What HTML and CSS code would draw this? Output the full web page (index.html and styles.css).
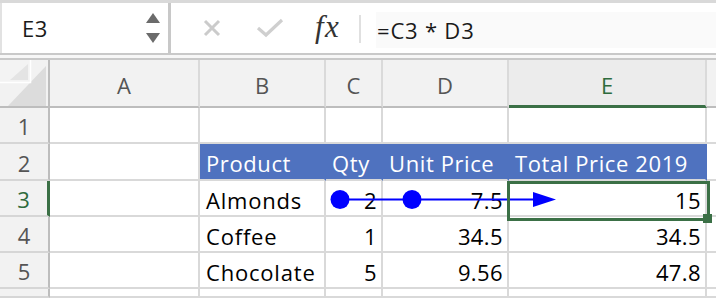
FILE: index.html
```html
<!DOCTYPE html>
<html lang="en">
<head>
    <meta charset="UTF-8">
    <title>Trace Precedents</title>
    <link rel="stylesheet" href="styles.css">
</head>
<body>
    <div class="toolbar">
        <div class="namebox">
            <span class="name">E3</span>
            <div class="spinner">
                <svg width="14" height="32" viewBox="0 0 14 32">
                    <polygon points="7,0 14,10 0,10" fill="#6b6b6b"/>
                    <polygon points="0,20 14,20 7,30" fill="#6b6b6b"/>
                </svg>
            </div>
        </div>
        <div class="actions">
            <svg class="icon-x" width="18" height="18" viewBox="0 0 18 18">
                <path d="M2 2 L16 16 M16 2 L2 16" stroke="#cbcbcb" stroke-width="3" fill="none"/>
            </svg>
            <svg class="icon-ok" width="28" height="20" viewBox="0 0 28 20">
                <path d="M2 10 L10 17 L26 2" stroke="#cfcfcf" stroke-width="3.2" fill="none"/>
            </svg>
            <span class="fx">fx</span>
        </div>
        <div class="formula">=C3 * D3</div>
    </div>
    <div class="gap"></div>

    <div class="sheet">
        <div class="hd corner">
            <svg width="48" height="48" viewBox="0 0 48 48">
                <rect x="0" y="0" width="30" height="22" fill="#f3f3f3"/>
                <polygon points="46,6 46,46 8,46" fill="#dcdcdc"/>
                <polygon points="28,4 28,20 10,20" fill="#e4e4e4"/>
                <path d="M0 22.5 H30.5 V0" stroke="#fff" stroke-width="1.5" fill="none"/>
            </svg>
        </div>
        <div class="hd">A</div>
        <div class="hd">B</div>
        <div class="hd">C</div>
        <div class="hd">D</div>
        <div class="hd active">E</div>
        <div class="hd last"></div>

        <div class="rh">1</div>
        <div class="c"></div><div class="c"></div><div class="c"></div><div class="c"></div><div class="c"></div><div class="c last"></div>

        <div class="rh">2</div>
        <div class="c"></div>
        <div class="c th">Product</div>
        <div class="c th">Qty</div>
        <div class="c th">Unit Price</div>
        <div class="c th">Total Price 2019</div>
        <div class="c last"></div>

        <div class="rh active">3</div>
        <div class="c"></div>
        <div class="c">Almonds</div>
        <div class="c num">2</div>
        <div class="c num">7.5</div>
        <div class="c num">15</div>
        <div class="c last"></div>

        <div class="rh">4</div>
        <div class="c"></div>
        <div class="c">Coffee</div>
        <div class="c num">1</div>
        <div class="c num">34.5</div>
        <div class="c num">34.5</div>
        <div class="c last"></div>

        <div class="rh">5</div>
        <div class="c"></div>
        <div class="c">Chocolate</div>
        <div class="c num">5</div>
        <div class="c num">9.56</div>
        <div class="c num">47.8</div>
        <div class="c last"></div>

        <div class="rh"></div>
        <div class="c"></div><div class="c"></div><div class="c"></div><div class="c"></div><div class="c"></div><div class="c last"></div>

        <!-- precedent tracer, drawn over the cells -->
        <svg class="tracer" width="716" height="238" viewBox="0 0 716 238">
            <line x1="340" y1="139.5" x2="540" y2="139.5" stroke="#0000ff" stroke-width="2"/>
            <circle cx="340" cy="139.5" r="9.5" fill="#0000ff"/>
            <circle cx="412" cy="139.5" r="9.5" fill="#0000ff"/>
            <polygon points="533,132 556,139.5 533,147" fill="#0000ff"/>
        </svg>
        <div class="selection"></div>
        <div class="handle"></div>
    </div>
</body>
</html>
```

FILE: styles.css
```css
body {
    margin: 0;
    font-family: "Open Sans", "Noto Sans", sans-serif;
    background: #fff;
    width: 716px;
    height: 298px;
    overflow: hidden;
}
.toolbar {
    display: flex;
    height: 55px;
    box-sizing: border-box;
    border-top: 3px solid #d9d9d9;
    border-bottom: 2px solid #c9c9c9;
    background: #fff;
}
.namebox {
    width: 171px;
    box-sizing: border-box;
    display: flex;
    align-items: center;
    border-left: 2px solid #e2e2e2;
    border-right: 3px solid #c8c8c8;
    padding-left: 20px;
}
.name {
    font-size: 22px;
    color: #1a1a1a;
    flex: 1;
    letter-spacing: 0.6px;
}
.spinner {
    display: flex;
    margin-right: 8px;
    margin-top: 2px;
}
.actions {
    display: flex;
    align-items: center;
    width: 190px;
    box-sizing: border-box;
    padding-left: 32px;
    position: relative;
}
.actions::after {
    content: "";
    position: absolute;
    right: 0;
    top: 12px;
    bottom: 10px;
    width: 2px;
    background: #e0e0e0;
}
.icon-x {
    margin-right: 35px;
}
.icon-ok {
    margin-right: 31px;
}
.fx {
    font-family: "Liberation Serif", "DejaVu Serif", serif;
    font-style: italic;
    font-size: 31px;
    color: #333;
    letter-spacing: 1.5px;
    margin-top: -3px;
}
.formula {
    flex: 1;
    margin: 9px 0 5px 15px;
    padding-left: 1px;
    background: #fafafa;
    font-size: 22px;
    color: #1a1a1a;
    display: flex;
    align-items: center;
    letter-spacing: 0.8px;
}
.gap {
    height: 3px;
    border-bottom: 2px solid #c9c9c9;
    background: #f7f7f7;
}
.sheet {
    position: relative;
    display: grid;
    grid-template-columns: 50px 150px 126px 57px 126px 198px 1fr;
    grid-template-rows: 48px 36px 37px 36px 36px 36px 1fr;
    height: 238px;
    font-size: 22px;
    color: #000;
}
.hd {
    background: #f2f2f2;
    color: #555;
    border-right: 2px solid #dadada;
    border-bottom: 2px solid #bdbdbd;
    display: flex;
    align-items: center;
    justify-content: center;
    padding-top: 4px;
    box-sizing: border-box;
}
.hd.corner {
    padding: 0;
    align-items: flex-start;
    justify-content: flex-start;
    border-right: 2px solid #bdbdbd;
}
.hd.active {
    color: #2e6b3d;
    background: #ececec;
    border-bottom: 3px solid #3b7046;
}
.hd.last {
    border-right: none;
}
.rh {
    background: #f2f2f2;
    color: #555;
    border-right: 2px solid #bdbdbd;
    border-bottom: 2px solid #d6d6d6;
    display: flex;
    align-items: center;
    justify-content: center;
    box-sizing: border-box;
    padding-top: 2px;
}
.rh.active {
    color: #2e6b3d;
    border-right: 3px solid #3b7046;
}
.c {
    border-right: 2px solid #d9d9d9;
    border-bottom: 2px solid #d9d9d9;
    box-sizing: border-box;
    display: flex;
    align-items: center;
    padding: 3px 4px 0 6px;
    letter-spacing: 0.8px;
    white-space: nowrap;
    overflow: hidden;
}
.c.num {
    justify-content: flex-end;
    letter-spacing: 0.4px;
}
.c.last {
    border-right: none;
}
.c.th {
    background: #4f72bf;
    color: #fff;
    border-right-color: #4f72bf;
    border-bottom-color: #d9d9d9;
    letter-spacing: 0.6px;
}
.tracer {
    position: absolute;
    left: 0;
    top: 0;
    pointer-events: none;
}
.selection {
    position: absolute;
    left: 507px;
    top: 121px;
    width: 203px;
    height: 40px;
    box-sizing: border-box;
    border: 3px solid #3b7046;
}
.handle {
    position: absolute;
    left: 703px;
    top: 154px;
    width: 9px;
    height: 9px;
    background: #3b7046;
}
```
